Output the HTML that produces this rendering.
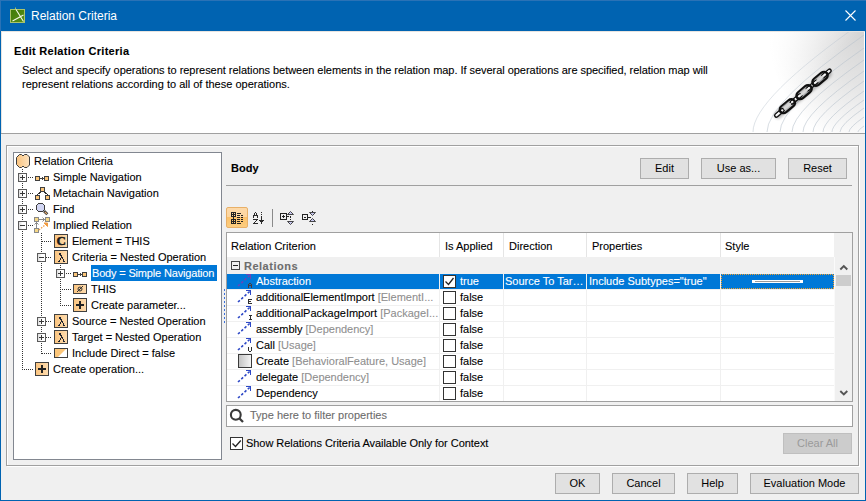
<!DOCTYPE html>
<html><head><meta charset="utf-8">
<style>
*{margin:0;padding:0;box-sizing:border-box}
html,body{width:866px;height:501px;overflow:hidden;background:#f0f0f0}
body{position:relative;font-family:"Liberation Sans",sans-serif;font-size:11px;color:#000}
.a{position:absolute}
.t{position:absolute;white-space:nowrap;line-height:16px;height:16px;-webkit-text-stroke:0.1px currentColor}
.btn{position:absolute;background:#e1e1e1;border:1px solid #adadad;text-align:center;line-height:19px;font-size:11px}
.etch{position:absolute;border:1px solid #a0a0a0;box-shadow:1px 1px 0 #fff, inset 1px 1px 0 #fff}
</style></head><body>
<!-- window border -->
<div class="a" style="left:0;top:0;width:866px;height:501px;border:1px solid #0063b1;border-top:none"></div>
<!-- title bar -->
<div class="a" style="left:0;top:0;width:866px;height:31px;background:#0063b1"></div>
<svg class="a" style="left:0;top:0" width="40" height="31"><defs><linearGradient id="tig" x1="0" y1="0" x2="1" y2="1"><stop offset="0" stop-color="#3f7a08"/><stop offset="1" stop-color="#5a9018"/></linearGradient></defs>
<rect x="10.5" y="9.5" width="14" height="13" fill="url(#tig)" stroke="#a9c36a"/>
<path d="M16 9.5 L23.5 21.5 M12.5 21 L23.5 15" stroke="#f4f8e8" stroke-width="1.1" fill="none"/>
<rect x="15" y="7.5" width="1" height="1.5" fill="#9fc060"/></svg>
<div class="t" style="left:31px;top:8px;color:#fff;font-size:12px;-webkit-text-stroke:0">Relation Criteria</div>
<svg class="a" style="left:845px;top:10px" width="11" height="11" viewBox="0 0 11 11"><path d="M0.5 0.5 L10.5 10.5 M10.5 0.5 L0.5 10.5" stroke="#fff" stroke-width="1.1"/></svg>

<div class="a" style="left:0;top:0;width:866px;height:1px;background:#2a72b6"></div>
<div class="a" style="left:0;top:0;width:1px;height:31px;background:#2a72b6"></div>
<!-- header -->
<div class="a" style="left:1px;top:31px;width:864px;height:102px;background:#fff;border-top:1px solid #e8e4e0;border-left:1px solid #e8e4e0"></div>
<!-- header image -->
<div class="a" style="left:740px;top:32px;width:124px;height:101px;background:radial-gradient(ellipse 95px 115px at 100% 0%,#d4d4d4 0%,#e4e4e4 45%,#fff 100%)"></div>
<svg class="a" style="left:740px;top:32px" width="124" height="101" viewBox="0 1 124 101">
<defs><filter id="bl" x="-30%" y="-30%" width="160%" height="160%"><feGaussianBlur stdDeviation="1.8"/></filter>
<linearGradient id="fade" x1="0" y1="0" x2="1" y2="0.75"><stop offset="0.2" stop-color="#fff" stop-opacity="1"/><stop offset="0.62" stop-color="#fff" stop-opacity="0"/></linearGradient></defs>
<g fill="none" stroke="#b8c3cc" stroke-width="0.6"><path d="M118 101 Q118 99.2 124 95"/><path d="M109 101 Q109 96.5 124 86"/><path d="M100 101 Q100 93.8 124 77"/><path d="M92 101 Q92 91.4 124 69"/><path d="M83 101 Q83 88.7 124 60"/><path d="M73 101 Q73 85.7 124 50"/><path d="M63 101 Q63 82.7 124 40"/><path d="M52 101 Q52 79.4 124 29"/><path d="M40 101 Q40 75.8 124 17"/><path d="M27 101 Q27 71.9 124 4"/><path d="M13 101 Q13 67.7 124 -10"/></g>
<rect x="0" y="0" width="124" height="102" fill="url(#fade)" opacity="0.8"/>
<path d="M38 84 L88 43" stroke="#000" stroke-width="7" opacity="0.28" filter="url(#bl)" stroke-linecap="round"/>
<g transform="translate(62.5 62.5) rotate(-40) scale(1.04 0.95)"><rect x="-34.5" y="-1.8" width="11" height="3.6" rx="1.8" fill="#e8e8e8" stroke="#101010" stroke-width="1.4"/><path d="M-33.0 -0.4 H-25.0" stroke="#fff" stroke-width="1"/><rect x="-15.0" y="-1.8" width="14" height="3.6" rx="1.8" fill="#e8e8e8" stroke="#101010" stroke-width="1.4"/><path d="M-13.5 -0.4 H-2.5" stroke="#fff" stroke-width="1"/><rect x="5.0" y="-1.8" width="14" height="3.6" rx="1.8" fill="#e8e8e8" stroke="#101010" stroke-width="1.4"/><path d="M6.5 -0.4 H17.5" stroke="#fff" stroke-width="1"/><rect x="24.5" y="-1.8" width="11" height="3.6" rx="1.8" fill="#e8e8e8" stroke="#101010" stroke-width="1.4"/><path d="M26.0 -0.4 H34.0" stroke="#fff" stroke-width="1"/><rect x="-27.5" y="-4" width="17" height="8" rx="4" fill="none" stroke="#101010" stroke-width="2.4"/><rect x="-23.5" y="-1.4" width="9" height="2.8" rx="1.4" fill="#d8d8d8"/><path d="M-24 -2.9 H-15" stroke="#9a9a9a" stroke-width="0.6"/><rect x="-6.5" y="-4" width="17" height="8" rx="4" fill="none" stroke="#101010" stroke-width="2.4"/><rect x="-2.5" y="-1.4" width="9" height="2.8" rx="1.4" fill="#d8d8d8"/><path d="M-3 -2.9 H6" stroke="#9a9a9a" stroke-width="0.6"/><rect x="13.5" y="-4" width="17" height="8" rx="4" fill="none" stroke="#101010" stroke-width="2.4"/><rect x="17.5" y="-1.4" width="9" height="2.8" rx="1.4" fill="#d8d8d8"/><path d="M17 -2.9 H26" stroke="#9a9a9a" stroke-width="0.6"/></g>
</svg>
<div class="a" style="left:1px;top:133px;width:864px;height:1px;background:#a0a0a0"></div>
<div class="t" style="left:14px;top:43px;font-weight:bold;letter-spacing:0.3px">Edit Relation Criteria</div>
<div class="t" style="left:22px;top:62px;letter-spacing:-0.04px">Select and specify operations to represent relations between elements in the relation map. If several operations are specified, relation map will</div>
<div class="t" style="left:22px;top:76px">represent relations according to all of these operations.</div>

<!-- main etched panel -->
<div class="etch" style="left:6px;top:145px;width:853px;height:321px"></div>

<!-- tree -->
<div class="a" style="left:13px;top:152px;width:209px;height:308px;background:#fff;border:1px solid #828790"></div>

<svg class="a" style="left:0;top:0" width="866" height="501" ><defs>
<linearGradient id="exg" x1="0" y1="0" x2="1" y2="0"><stop offset="0" stop-color="#d8d8d8"/><stop offset="0.5" stop-color="#fff"/><stop offset="1" stop-color="#fff"/></linearGradient>
<linearGradient id="og" x1="0" y1="0" x2="1" y2="0"><stop offset="0" stop-color="#fbc47e"/><stop offset="1" stop-color="#fde3c0"/></linearGradient>
<linearGradient id="og2" x1="0" y1="0" x2="1" y2="0"><stop offset="0" stop-color="#fbc47e"/><stop offset="1" stop-color="#fddcb0"/></linearGradient>
</defs><g fill="#333" shape-rendering="crispEdges"><rect x="22" y="169" width="1" height="1"/><rect x="22" y="171" width="1" height="1"/><rect x="22" y="173" width="1" height="1"/><rect x="22" y="175" width="1" height="1"/><rect x="22" y="177" width="1" height="1"/><rect x="22" y="179" width="1" height="1"/><rect x="22" y="181" width="1" height="1"/><rect x="22" y="183" width="1" height="1"/><rect x="22" y="185" width="1" height="1"/><rect x="22" y="187" width="1" height="1"/><rect x="22" y="189" width="1" height="1"/><rect x="22" y="191" width="1" height="1"/><rect x="22" y="193" width="1" height="1"/><rect x="22" y="195" width="1" height="1"/><rect x="22" y="197" width="1" height="1"/><rect x="22" y="199" width="1" height="1"/><rect x="22" y="201" width="1" height="1"/><rect x="22" y="203" width="1" height="1"/><rect x="22" y="205" width="1" height="1"/><rect x="22" y="207" width="1" height="1"/><rect x="22" y="209" width="1" height="1"/><rect x="22" y="211" width="1" height="1"/><rect x="22" y="213" width="1" height="1"/><rect x="22" y="215" width="1" height="1"/><rect x="22" y="217" width="1" height="1"/><rect x="22" y="219" width="1" height="1"/><rect x="22" y="221" width="1" height="1"/><rect x="22" y="223" width="1" height="1"/><rect x="22" y="225" width="1" height="1"/><rect x="22" y="227" width="1" height="1"/><rect x="22" y="229" width="1" height="1"/><rect x="22" y="231" width="1" height="1"/><rect x="22" y="233" width="1" height="1"/><rect x="22" y="235" width="1" height="1"/><rect x="22" y="237" width="1" height="1"/><rect x="22" y="239" width="1" height="1"/><rect x="22" y="241" width="1" height="1"/><rect x="22" y="243" width="1" height="1"/><rect x="22" y="245" width="1" height="1"/><rect x="22" y="247" width="1" height="1"/><rect x="22" y="249" width="1" height="1"/><rect x="22" y="251" width="1" height="1"/><rect x="22" y="253" width="1" height="1"/><rect x="22" y="255" width="1" height="1"/><rect x="22" y="257" width="1" height="1"/><rect x="22" y="259" width="1" height="1"/><rect x="22" y="261" width="1" height="1"/><rect x="22" y="263" width="1" height="1"/><rect x="22" y="265" width="1" height="1"/><rect x="22" y="267" width="1" height="1"/><rect x="22" y="269" width="1" height="1"/><rect x="22" y="271" width="1" height="1"/><rect x="22" y="273" width="1" height="1"/><rect x="22" y="275" width="1" height="1"/><rect x="22" y="277" width="1" height="1"/><rect x="22" y="279" width="1" height="1"/><rect x="22" y="281" width="1" height="1"/><rect x="22" y="283" width="1" height="1"/><rect x="22" y="285" width="1" height="1"/><rect x="22" y="287" width="1" height="1"/><rect x="22" y="289" width="1" height="1"/><rect x="22" y="291" width="1" height="1"/><rect x="22" y="293" width="1" height="1"/><rect x="22" y="295" width="1" height="1"/><rect x="22" y="297" width="1" height="1"/><rect x="22" y="299" width="1" height="1"/><rect x="22" y="301" width="1" height="1"/><rect x="22" y="303" width="1" height="1"/><rect x="22" y="305" width="1" height="1"/><rect x="22" y="307" width="1" height="1"/><rect x="22" y="309" width="1" height="1"/><rect x="22" y="311" width="1" height="1"/><rect x="22" y="313" width="1" height="1"/><rect x="22" y="315" width="1" height="1"/><rect x="22" y="317" width="1" height="1"/><rect x="22" y="319" width="1" height="1"/><rect x="22" y="321" width="1" height="1"/><rect x="22" y="323" width="1" height="1"/><rect x="22" y="325" width="1" height="1"/><rect x="22" y="327" width="1" height="1"/><rect x="22" y="329" width="1" height="1"/><rect x="22" y="331" width="1" height="1"/><rect x="22" y="333" width="1" height="1"/><rect x="22" y="335" width="1" height="1"/><rect x="22" y="337" width="1" height="1"/><rect x="22" y="339" width="1" height="1"/><rect x="22" y="341" width="1" height="1"/><rect x="22" y="343" width="1" height="1"/><rect x="22" y="345" width="1" height="1"/><rect x="22" y="347" width="1" height="1"/><rect x="22" y="349" width="1" height="1"/><rect x="22" y="351" width="1" height="1"/><rect x="22" y="353" width="1" height="1"/><rect x="22" y="355" width="1" height="1"/><rect x="22" y="357" width="1" height="1"/><rect x="22" y="359" width="1" height="1"/><rect x="22" y="361" width="1" height="1"/><rect x="22" y="363" width="1" height="1"/><rect x="22" y="365" width="1" height="1"/><rect x="22" y="367" width="1" height="1"/><rect x="22" y="369" width="1" height="1"/><rect x="22" y="177" width="1" height="1"/><rect x="24" y="177" width="1" height="1"/><rect x="26" y="177" width="1" height="1"/><rect x="28" y="177" width="1" height="1"/><rect x="30" y="177" width="1" height="1"/><rect x="32" y="177" width="1" height="1"/><rect x="22" y="193" width="1" height="1"/><rect x="24" y="193" width="1" height="1"/><rect x="26" y="193" width="1" height="1"/><rect x="28" y="193" width="1" height="1"/><rect x="30" y="193" width="1" height="1"/><rect x="32" y="193" width="1" height="1"/><rect x="22" y="209" width="1" height="1"/><rect x="24" y="209" width="1" height="1"/><rect x="26" y="209" width="1" height="1"/><rect x="28" y="209" width="1" height="1"/><rect x="30" y="209" width="1" height="1"/><rect x="32" y="209" width="1" height="1"/><rect x="22" y="225" width="1" height="1"/><rect x="24" y="225" width="1" height="1"/><rect x="26" y="225" width="1" height="1"/><rect x="28" y="225" width="1" height="1"/><rect x="30" y="225" width="1" height="1"/><rect x="32" y="225" width="1" height="1"/><rect x="42" y="241" width="1" height="1"/><rect x="44" y="241" width="1" height="1"/><rect x="46" y="241" width="1" height="1"/><rect x="48" y="241" width="1" height="1"/><rect x="50" y="241" width="1" height="1"/><rect x="42" y="257" width="1" height="1"/><rect x="44" y="257" width="1" height="1"/><rect x="46" y="257" width="1" height="1"/><rect x="48" y="257" width="1" height="1"/><rect x="50" y="257" width="1" height="1"/><rect x="60" y="273" width="1" height="1"/><rect x="62" y="273" width="1" height="1"/><rect x="64" y="273" width="1" height="1"/><rect x="66" y="273" width="1" height="1"/><rect x="68" y="273" width="1" height="1"/><rect x="70" y="273" width="1" height="1"/><rect x="60" y="289" width="1" height="1"/><rect x="62" y="289" width="1" height="1"/><rect x="64" y="289" width="1" height="1"/><rect x="66" y="289" width="1" height="1"/><rect x="68" y="289" width="1" height="1"/><rect x="70" y="289" width="1" height="1"/><rect x="60" y="305" width="1" height="1"/><rect x="62" y="305" width="1" height="1"/><rect x="64" y="305" width="1" height="1"/><rect x="66" y="305" width="1" height="1"/><rect x="68" y="305" width="1" height="1"/><rect x="70" y="305" width="1" height="1"/><rect x="42" y="321" width="1" height="1"/><rect x="44" y="321" width="1" height="1"/><rect x="46" y="321" width="1" height="1"/><rect x="48" y="321" width="1" height="1"/><rect x="50" y="321" width="1" height="1"/><rect x="42" y="337" width="1" height="1"/><rect x="44" y="337" width="1" height="1"/><rect x="46" y="337" width="1" height="1"/><rect x="48" y="337" width="1" height="1"/><rect x="50" y="337" width="1" height="1"/><rect x="42" y="353" width="1" height="1"/><rect x="44" y="353" width="1" height="1"/><rect x="46" y="353" width="1" height="1"/><rect x="48" y="353" width="1" height="1"/><rect x="50" y="353" width="1" height="1"/><rect x="22" y="369" width="1" height="1"/><rect x="24" y="369" width="1" height="1"/><rect x="26" y="369" width="1" height="1"/><rect x="28" y="369" width="1" height="1"/><rect x="30" y="369" width="1" height="1"/><rect x="32" y="369" width="1" height="1"/><rect x="41" y="233" width="1" height="1"/><rect x="41" y="235" width="1" height="1"/><rect x="41" y="237" width="1" height="1"/><rect x="41" y="239" width="1" height="1"/><rect x="41" y="241" width="1" height="1"/><rect x="41" y="243" width="1" height="1"/><rect x="41" y="245" width="1" height="1"/><rect x="41" y="247" width="1" height="1"/><rect x="41" y="249" width="1" height="1"/><rect x="41" y="251" width="1" height="1"/><rect x="41" y="253" width="1" height="1"/><rect x="41" y="255" width="1" height="1"/><rect x="41" y="257" width="1" height="1"/><rect x="41" y="259" width="1" height="1"/><rect x="41" y="261" width="1" height="1"/><rect x="41" y="263" width="1" height="1"/><rect x="41" y="265" width="1" height="1"/><rect x="41" y="267" width="1" height="1"/><rect x="41" y="269" width="1" height="1"/><rect x="41" y="271" width="1" height="1"/><rect x="41" y="273" width="1" height="1"/><rect x="41" y="275" width="1" height="1"/><rect x="41" y="277" width="1" height="1"/><rect x="41" y="279" width="1" height="1"/><rect x="41" y="281" width="1" height="1"/><rect x="41" y="283" width="1" height="1"/><rect x="41" y="285" width="1" height="1"/><rect x="41" y="287" width="1" height="1"/><rect x="41" y="289" width="1" height="1"/><rect x="41" y="291" width="1" height="1"/><rect x="41" y="293" width="1" height="1"/><rect x="41" y="295" width="1" height="1"/><rect x="41" y="297" width="1" height="1"/><rect x="41" y="299" width="1" height="1"/><rect x="41" y="301" width="1" height="1"/><rect x="41" y="303" width="1" height="1"/><rect x="41" y="305" width="1" height="1"/><rect x="41" y="307" width="1" height="1"/><rect x="41" y="309" width="1" height="1"/><rect x="41" y="311" width="1" height="1"/><rect x="41" y="313" width="1" height="1"/><rect x="41" y="315" width="1" height="1"/><rect x="41" y="317" width="1" height="1"/><rect x="41" y="319" width="1" height="1"/><rect x="41" y="321" width="1" height="1"/><rect x="41" y="323" width="1" height="1"/><rect x="41" y="325" width="1" height="1"/><rect x="41" y="327" width="1" height="1"/><rect x="41" y="329" width="1" height="1"/><rect x="41" y="331" width="1" height="1"/><rect x="41" y="333" width="1" height="1"/><rect x="41" y="335" width="1" height="1"/><rect x="41" y="337" width="1" height="1"/><rect x="41" y="339" width="1" height="1"/><rect x="41" y="341" width="1" height="1"/><rect x="41" y="343" width="1" height="1"/><rect x="41" y="345" width="1" height="1"/><rect x="41" y="347" width="1" height="1"/><rect x="41" y="349" width="1" height="1"/><rect x="41" y="351" width="1" height="1"/><rect x="41" y="353" width="1" height="1"/><rect x="60" y="265" width="1" height="1"/><rect x="60" y="267" width="1" height="1"/><rect x="60" y="269" width="1" height="1"/><rect x="60" y="271" width="1" height="1"/><rect x="60" y="273" width="1" height="1"/><rect x="60" y="275" width="1" height="1"/><rect x="60" y="277" width="1" height="1"/><rect x="60" y="279" width="1" height="1"/><rect x="60" y="281" width="1" height="1"/><rect x="60" y="283" width="1" height="1"/><rect x="60" y="285" width="1" height="1"/><rect x="60" y="287" width="1" height="1"/><rect x="60" y="289" width="1" height="1"/><rect x="60" y="291" width="1" height="1"/><rect x="60" y="293" width="1" height="1"/><rect x="60" y="295" width="1" height="1"/><rect x="60" y="297" width="1" height="1"/><rect x="60" y="299" width="1" height="1"/><rect x="60" y="301" width="1" height="1"/><rect x="60" y="303" width="1" height="1"/><rect x="60" y="305" width="1" height="1"/></g><path d="M19.5 154.5 h2 l1.5 1.5 l1.5 -1.5 h2.5 l2.5 2.5 v8 l-2.5 2.5 h-2.5 l-1.5 -1.5 l-1.5 1.5 h-2 l-3 -3 v-7 z" fill="url(#og)" stroke="#3c3c3c" stroke-width="1"/><rect x="18.5" y="173.5" width="8" height="8" fill="url(#exg)" stroke="#5a5a5a"/><rect x="20" y="177" width="5" height="1" fill="#383838"/><rect x="22" y="175" width="1" height="5" fill="#383838"/><rect x="35.5" y="176.5" width="4" height="4" fill="#fcc679" stroke="#404040"/><rect x="44.5" y="176.5" width="4" height="4" fill="#fcc679" stroke="#404040"/><rect x="40" y="178" width="4" height="1" fill="#404040"/><rect x="42" y="177" width="1" height="3" fill="#404040"/><rect x="18.5" y="189.5" width="8" height="8" fill="url(#exg)" stroke="#5a5a5a"/><rect x="20" y="193" width="5" height="1" fill="#383838"/><rect x="22" y="191" width="1" height="5" fill="#383838"/><g shape-rendering="crispEdges"><rect x="40.5" y="187.5" width="4" height="4" fill="#fcc679" stroke="#404040"/><rect x="35.5" y="195.5" width="4" height="4" fill="#fcc679" stroke="#404040"/><rect x="45.5" y="195.5" width="4" height="4" fill="#fcc679" stroke="#404040"/><rect x="39" y="192" width="1" height="1" fill="#303030"/><rect x="38" y="193" width="1" height="1" fill="#303030"/><rect x="40" y="192" width="1" height="1" fill="#303030"/><rect x="37" y="194" width="1" height="1" fill="#303030"/><rect x="39" y="193" width="1" height="1" fill="#303030"/><rect x="45" y="192" width="1" height="1" fill="#303030"/><rect x="46" y="193" width="1" height="1" fill="#303030"/><rect x="44" y="192" width="1" height="1" fill="#303030"/><rect x="47" y="194" width="1" height="1" fill="#303030"/><rect x="45" y="193" width="1" height="1" fill="#303030"/></g><rect x="18.5" y="205.5" width="8" height="8" fill="url(#exg)" stroke="#5a5a5a"/><rect x="20" y="209" width="5" height="1" fill="#383838"/><rect x="22" y="207" width="1" height="5" fill="#383838"/><path d="M44 211 L47.3 214.3" stroke="#3c3c3c" stroke-width="2.8"/><path d="M44.8 211.8 L46.8 213.8" stroke="#f0b070" stroke-width="1.1"/><path d="M38.5 203.5 H42.5 L44.5 205.5 V209.5 L42.5 211.5 H38.5 L36.5 209.5 V205.5 Z" fill="#d2d6f4" stroke="#3c3c3c" shape-rendering="crispEdges"/><rect x="18.5" y="221.5" width="8" height="8" fill="url(#exg)" stroke="#5a5a5a"/><rect x="20" y="225" width="5" height="1" fill="#383838"/><g shape-rendering="crispEdges"><rect x="34.5" y="217.5" width="4" height="4" fill="#f6d886" stroke="#8a8a8a"/><rect x="45.5" y="217.5" width="4" height="4" fill="#f6d886" stroke="#8a8a8a"/><rect x="34.5" y="228.5" width="4" height="4" fill="#f6d886" stroke="#8a8a8a"/><rect x="39" y="219" width="6" height="1" fill="#8a8a8a"/><rect x="36" y="222" width="1" height="6" fill="#8a8a8a"/></g><path d="M42.5 217.5 L44.5 219.5 L42.5 221.5 M34.5 224.5 L36.5 222.5 L38.5 224.5" stroke="#8a8a8a" stroke-width="1" fill="none"/><path d="M39 230 L45 225" stroke="#f09a40" stroke-width="1.3" stroke-dasharray="1.4 1.4"/><path d="M44 223 h3.5 v3.5 z" fill="#f09a40" stroke="#f09a40" stroke-width="1"/><rect x="54.5" y="234.5" width="13" height="13" fill="url(#og2)" stroke="#404040" shape-rendering="crispEdges"/><text x="61.2" y="245.3" font-family="Liberation Serif" font-weight="bold" font-size="13" text-anchor="middle" fill="#1a1a1a" stroke="#1a1a1a" stroke-width="0.5">C</text><rect x="37.5" y="253.5" width="8" height="8" fill="url(#exg)" stroke="#5a5a5a"/><rect x="39" y="257" width="5" height="1" fill="#383838"/><rect x="54.5" y="250.5" width="13" height="13" fill="url(#og2)" stroke="#404040" shape-rendering="crispEdges"/><g fill="#1f2430" shape-rendering="crispEdges"><rect x="59" y="253" width="1" height="1"/><rect x="60" y="253" width="1" height="1"/><rect x="59" y="254" width="1" height="1"/><rect x="60" y="254" width="1" height="1"/><rect x="60" y="255" width="1" height="1"/><rect x="61" y="255" width="1" height="1"/><rect x="61" y="256" width="1" height="1"/><rect x="61" y="257" width="1" height="1"/><rect x="62" y="257" width="1" height="1"/><rect x="60" y="258" width="1" height="1"/><rect x="62" y="258" width="1" height="1"/><rect x="60" y="259" width="1" height="1"/><rect x="63" y="259" width="1" height="1"/><rect x="59" y="260" width="1" height="1"/><rect x="63" y="260" width="1" height="1"/><rect x="58" y="261" width="1" height="1"/><rect x="59" y="261" width="1" height="1"/><rect x="63" y="261" width="1" height="1"/><rect x="64" y="261" width="1" height="1"/></g><rect x="56.5" y="269.5" width="8" height="8" fill="url(#exg)" stroke="#5a5a5a"/><rect x="58" y="273" width="5" height="1" fill="#383838"/><rect x="60" y="271" width="1" height="5" fill="#383838"/><rect x="73.5" y="272.5" width="4" height="4" fill="#fcc679" stroke="#404040"/><rect x="82.5" y="272.5" width="4" height="4" fill="#fcc679" stroke="#404040"/><rect x="78" y="274" width="4" height="1" fill="#404040"/><rect x="80" y="273" width="1" height="3" fill="#404040"/><rect x="73.5" y="284.5" width="13" height="9" fill="url(#og2)" stroke="#404040" shape-rendering="crispEdges"/><circle cx="80" cy="289" r="2" fill="none" stroke="#333" stroke-width="1"/><path d="M77 292 L83 286" stroke="#333" stroke-width="1"/><rect x="73.5" y="298.5" width="13" height="13" fill="url(#og2)" stroke="#404040" shape-rendering="crispEdges"/><path d="M76 305 H84 M80 301 V309" stroke="#222" stroke-width="2"/><rect x="37.5" y="317.5" width="8" height="8" fill="url(#exg)" stroke="#5a5a5a"/><rect x="39" y="321" width="5" height="1" fill="#383838"/><rect x="41" y="319" width="1" height="5" fill="#383838"/><rect x="54.5" y="314.5" width="13" height="13" fill="url(#og2)" stroke="#404040" shape-rendering="crispEdges"/><g fill="#1f2430" shape-rendering="crispEdges"><rect x="59" y="317" width="1" height="1"/><rect x="60" y="317" width="1" height="1"/><rect x="59" y="318" width="1" height="1"/><rect x="60" y="318" width="1" height="1"/><rect x="60" y="319" width="1" height="1"/><rect x="61" y="319" width="1" height="1"/><rect x="61" y="320" width="1" height="1"/><rect x="61" y="321" width="1" height="1"/><rect x="62" y="321" width="1" height="1"/><rect x="60" y="322" width="1" height="1"/><rect x="62" y="322" width="1" height="1"/><rect x="60" y="323" width="1" height="1"/><rect x="63" y="323" width="1" height="1"/><rect x="59" y="324" width="1" height="1"/><rect x="63" y="324" width="1" height="1"/><rect x="58" y="325" width="1" height="1"/><rect x="59" y="325" width="1" height="1"/><rect x="63" y="325" width="1" height="1"/><rect x="64" y="325" width="1" height="1"/></g><rect x="37.5" y="333.5" width="8" height="8" fill="url(#exg)" stroke="#5a5a5a"/><rect x="39" y="337" width="5" height="1" fill="#383838"/><rect x="41" y="335" width="1" height="5" fill="#383838"/><rect x="54.5" y="330.5" width="13" height="13" fill="url(#og2)" stroke="#404040" shape-rendering="crispEdges"/><g fill="#1f2430" shape-rendering="crispEdges"><rect x="59" y="333" width="1" height="1"/><rect x="60" y="333" width="1" height="1"/><rect x="59" y="334" width="1" height="1"/><rect x="60" y="334" width="1" height="1"/><rect x="60" y="335" width="1" height="1"/><rect x="61" y="335" width="1" height="1"/><rect x="61" y="336" width="1" height="1"/><rect x="61" y="337" width="1" height="1"/><rect x="62" y="337" width="1" height="1"/><rect x="60" y="338" width="1" height="1"/><rect x="62" y="338" width="1" height="1"/><rect x="60" y="339" width="1" height="1"/><rect x="63" y="339" width="1" height="1"/><rect x="59" y="340" width="1" height="1"/><rect x="63" y="340" width="1" height="1"/><rect x="58" y="341" width="1" height="1"/><rect x="59" y="341" width="1" height="1"/><rect x="63" y="341" width="1" height="1"/><rect x="64" y="341" width="1" height="1"/></g><rect x="54.5" y="348.5" width="13" height="9" fill="#fff" stroke="#404040" shape-rendering="crispEdges"/><path d="M55 349 H66 L58 357 H55 Z" fill="#fcc679"/><rect x="35.5" y="362.5" width="13" height="13" fill="url(#og2)" stroke="#404040" shape-rendering="crispEdges"/><path d="M38 369 H46 M42 365 V373" stroke="#222" stroke-width="2"/></svg>
<div class="t" style="left:34px;top:153px">Relation Criteria</div>
<div class="t" style="left:53px;top:169px">Simple Navigation</div>
<div class="t" style="left:53px;top:185px">Metachain Navigation</div>
<div class="t" style="left:53px;top:201px">Find</div>
<div class="t" style="left:53px;top:217px">Implied Relation</div>
<div class="t" style="left:72px;top:233px">Element = THIS</div>
<div class="t" style="left:72px;top:249px">Criteria = Nested Operation</div>
<div class="t" style="left:91px;top:265px;width:126px;overflow:hidden;letter-spacing:-0.17px;background:#0078d7;color:#fff;padding:0 0 0 1px">Body = Simple Navigation</div>
<div class="t" style="left:91px;top:281px">THIS</div>
<div class="t" style="left:91px;top:297px">Create parameter...</div>
<div class="t" style="left:72px;top:313px">Source = Nested Operation</div>
<div class="t" style="left:72px;top:329px">Target = Nested Operation</div>
<div class="t" style="left:72px;top:345px">Include Direct = false</div>
<div class="t" style="left:53px;top:361px">Create operation...</div>
<svg class="a" style="left:224px;top:289px" width="1" height="34"><g fill="#3a70d8"><rect x="0" y="0" width="1" height="2"/><rect x="0" y="4" width="1" height="2"/><rect x="0" y="8" width="1" height="2"/><rect x="0" y="12" width="1" height="2"/><rect x="0" y="16" width="1" height="2"/><rect x="0" y="20" width="1" height="2"/><rect x="0" y="24" width="1" height="2"/><rect x="0" y="28" width="1" height="2"/><rect x="0" y="32" width="1" height="2"/></g></svg>
<!-- right panel -->
<div class="t" style="left:231px;top:160px;font-weight:bold">Body</div>
<div class="btn" style="left:640px;top:158px;width:49px;height:21px">Edit</div>
<div class="btn" style="left:701px;top:158px;width:75px;height:21px">Use as...</div>
<div class="btn" style="left:788px;top:158px;width:59px;height:21px">Reset</div>
<div class="a" style="left:226px;top:185px;width:626px;height:1px;background:#a0a0a0"></div>

<!-- toolbar -->
<div class="a" style="left:226px;top:207px;width:22px;height:21px;border:1px solid #e8b068;border-radius:2px;background:linear-gradient(#fdd9a9 0,#fdd6a0 45%,#fcc26c 50%,#fccd80 100%)"></div>
<svg class="a" style="left:0;top:0" width="866" height="501">
<g shape-rendering="crispEdges" fill="#222">
<!-- grid icon boxes -->
<rect x="231" y="212" width="5" height="1"/><rect x="231" y="216" width="5" height="1"/><rect x="231" y="212" width="1" height="5"/><rect x="235" y="212" width="1" height="5"/>
<rect x="233" y="213" width="1" height="3"/><rect x="232" y="214" width="3" height="1"/>
<rect x="233" y="217" width="1" height="2"/>
<rect x="231" y="219" width="5" height="1"/><rect x="231" y="223" width="5" height="1"/><rect x="231" y="219" width="1" height="5"/><rect x="235" y="219" width="1" height="5"/>
<rect x="233" y="220" width="1" height="3"/><rect x="232" y="221" width="3" height="1"/>
<rect x="237" y="213" width="4" height="1"/><rect x="237" y="215" width="3" height="1"/><rect x="241" y="215" width="2" height="1"/><rect x="237" y="217" width="3" height="1"/><rect x="241" y="217" width="2" height="1"/><rect x="237" y="219" width="3" height="1"/><rect x="241" y="219" width="2" height="1"/><rect x="237" y="221" width="3" height="1"/><rect x="241" y="221" width="2" height="1"/><rect x="237" y="223" width="4" height="1"/>
<!-- separator -->
<rect x="272" y="209" width="1" height="18" fill="#8a8a8a"/>
<!-- expand icon box -->
<rect x="280" y="213" width="7" height="1"/><rect x="280" y="219" width="7" height="1"/><rect x="280" y="213" width="1" height="7"/><rect x="286" y="213" width="1" height="7"/>
<rect x="283" y="215" width="1" height="3"/><rect x="282" y="216" width="3" height="1"/>
<rect x="287" y="216" width="2" height="1"/>
<rect x="290" y="216" width="1" height="2"/><rect x="290" y="219" width="1" height="1"/>
<!-- collapse icon box -->
<rect x="302" y="214" width="6" height="1"/><rect x="302" y="219" width="6" height="1"/><rect x="302" y="214" width="1" height="6"/><rect x="307" y="214" width="1" height="6"/>
<rect x="304" y="217" width="2" height="1"/>
<rect x="308" y="217" width="3" height="1"/>
<rect x="312" y="211" width="1" height="1"/><rect x="312" y="224" width="1" height="1"/>
</g>
<!-- AZ --><g fill="#2a2a2a" shape-rendering="crispEdges"><rect x="255" y="212" width="1" height="1"/><rect x="261" y="212" width="1" height="1"/><rect x="254" y="213" width="1" height="1"/><rect x="256" y="213" width="1" height="1"/><rect x="254" y="214" width="1" height="1"/><rect x="256" y="214" width="1" height="1"/><rect x="261" y="214" width="1" height="1"/><rect x="253" y="215" width="1" height="1"/><rect x="254" y="215" width="1" height="1"/><rect x="255" y="215" width="1" height="1"/><rect x="256" y="215" width="1" height="1"/><rect x="257" y="215" width="1" height="1"/><rect x="253" y="216" width="1" height="1"/><rect x="257" y="216" width="1" height="1"/><rect x="261" y="216" width="1" height="1"/><rect x="253" y="217" width="1" height="1"/><rect x="257" y="217" width="1" height="1"/><rect x="261" y="217" width="1" height="1"/><rect x="261" y="218" width="1" height="1"/><rect x="253" y="219" width="1" height="1"/><rect x="254" y="219" width="1" height="1"/><rect x="255" y="219" width="1" height="1"/><rect x="256" y="219" width="1" height="1"/><rect x="257" y="219" width="1" height="1"/><rect x="261" y="219" width="1" height="1"/><rect x="256" y="220" width="1" height="1"/><rect x="259" y="220" width="1" height="1"/><rect x="260" y="220" width="1" height="1"/><rect x="261" y="220" width="1" height="1"/><rect x="262" y="220" width="1" height="1"/><rect x="263" y="220" width="1" height="1"/><rect x="255" y="221" width="1" height="1"/><rect x="260" y="221" width="1" height="1"/><rect x="261" y="221" width="1" height="1"/><rect x="262" y="221" width="1" height="1"/><rect x="254" y="222" width="1" height="1"/><rect x="261" y="222" width="1" height="1"/><rect x="253" y="223" width="1" height="1"/><rect x="254" y="223" width="1" height="1"/><rect x="255" y="223" width="1" height="1"/><rect x="256" y="223" width="1" height="1"/><rect x="257" y="223" width="1" height="1"/><rect x="261" y="223" width="1" height="1"/></g>
<!-- expand triangles -->
<path d="M287.5 214.5 L290.5 211.5 L293.5 214.5 Z" fill="#c8c8f0" stroke="#333" stroke-width="0.9"/>
<path d="M287.5 221.5 L290.5 224.5 L293.5 221.5 Z" fill="#c8c8f0" stroke="#333" stroke-width="0.9"/>
<path d="M309.5 212.5 L312.5 215.5 L315.5 212.5 Z" fill="#c8c8f0" stroke="#333" stroke-width="0.9"/>
<path d="M309.5 221.5 L312.5 218.5 L315.5 221.5 Z" fill="#c8c8f0" stroke="#333" stroke-width="0.9"/>
</svg>
<!-- table -->
<div class="a" style="left:226px;top:232px;width:627px;height:170px;background:#fff;border:1px solid #a0a0a0"></div>

<svg class="a" style="left:0;top:0" width="866" height="501"><defs><linearGradient id="gg" x1="0" y1="0" x2="1" y2="0"><stop offset="0" stop-color="#c2c2c2"/><stop offset="1" stop-color="#f6f6f6"/></linearGradient></defs><rect x="439" y="233" width="1" height="24" fill="#e5e5e5"/><rect x="503" y="233" width="1" height="24" fill="#e5e5e5"/><rect x="586" y="233" width="1" height="24" fill="#e5e5e5"/><rect x="720" y="233" width="1" height="24" fill="#e5e5e5"/><rect x="834" y="233" width="18" height="24" fill="#f0f0f0"/><rect x="227" y="257" width="607" height="17" fill="#f0f0f0"/><rect x="231.5" y="261.5" width="8" height="8" fill="none" stroke="#444"/><rect x="233" y="265" width="5" height="1" fill="#222"/><rect x="227" y="289" width="607" height="1" fill="#f0f0f0"/><rect x="439" y="274" width="1" height="15" fill="#f0f0f0"/><rect x="503" y="274" width="1" height="15" fill="#f0f0f0"/><rect x="586" y="274" width="1" height="15" fill="#f0f0f0"/><rect x="720" y="274" width="1" height="15" fill="#f0f0f0"/><rect x="227" y="274" width="212" height="15" fill="#0078d7"/><rect x="440" y="274" width="63" height="15" fill="#0078d7"/><rect x="504" y="274" width="82" height="15" fill="#0078d7"/><rect x="587" y="274" width="133" height="15" fill="#0078d7"/><rect x="721" y="274" width="113" height="15" fill="#0078d7"/><g shape-rendering="crispEdges" fill="#6a44b8"><rect x="246" y="274" width="5" height="1"/><rect x="250" y="274" width="1" height="5"/></g><path d="M238 286 L250 275.2" stroke="#6a44b8" stroke-width="1.6" stroke-dasharray="2.5 1.9" fill="none"/><rect x="249" y="283" width="1" height="1" fill="#4a3a3a" shape-rendering="crispEdges"/><rect x="250" y="283" width="1" height="1" fill="#4a3a3a" shape-rendering="crispEdges"/><rect x="248" y="284" width="1" height="1" fill="#4a3a3a" shape-rendering="crispEdges"/><rect x="251" y="284" width="1" height="1" fill="#4a3a3a" shape-rendering="crispEdges"/><rect x="248" y="285" width="1" height="1" fill="#4a3a3a" shape-rendering="crispEdges"/><rect x="249" y="285" width="1" height="1" fill="#4a3a3a" shape-rendering="crispEdges"/><rect x="250" y="285" width="1" height="1" fill="#4a3a3a" shape-rendering="crispEdges"/><rect x="251" y="285" width="1" height="1" fill="#4a3a3a" shape-rendering="crispEdges"/><rect x="248" y="286" width="1" height="1" fill="#4a3a3a" shape-rendering="crispEdges"/><rect x="251" y="286" width="1" height="1" fill="#4a3a3a" shape-rendering="crispEdges"/><rect x="248" y="287" width="1" height="1" fill="#4a3a3a" shape-rendering="crispEdges"/><rect x="251" y="287" width="1" height="1" fill="#4a3a3a" shape-rendering="crispEdges"/><rect x="443.5" y="275.5" width="12" height="12" fill="#fff" stroke="#333"/><path d="M445.5 281.5 L448.5 284.5 L453.5 278" stroke="#222" stroke-width="1.3" fill="none"/><rect x="721.5" y="274.5" width="112" height="14" fill="none" stroke="#f0a030" stroke-width="1" stroke-dasharray="1 1" shape-rendering="crispEdges"/><rect x="752" y="280" width="51" height="3" fill="#fff"/><rect x="755" y="281" width="45" height="1" fill="#9a9a9a"/><rect x="227" y="305" width="607" height="1" fill="#f0f0f0"/><rect x="439" y="289" width="1" height="16" fill="#f0f0f0"/><rect x="503" y="289" width="1" height="16" fill="#f0f0f0"/><rect x="586" y="289" width="1" height="16" fill="#f0f0f0"/><rect x="720" y="289" width="1" height="16" fill="#f0f0f0"/><g shape-rendering="crispEdges" fill="#2d48c6"><rect x="246" y="290" width="5" height="1"/><rect x="250" y="290" width="1" height="5"/></g><path d="M238 302 L250 291.2" stroke="#2d48c6" stroke-width="1.6" stroke-dasharray="2.5 1.9" fill="none"/><rect x="248" y="299" width="1" height="1" fill="#303030" shape-rendering="crispEdges"/><rect x="249" y="299" width="1" height="1" fill="#303030" shape-rendering="crispEdges"/><rect x="250" y="299" width="1" height="1" fill="#303030" shape-rendering="crispEdges"/><rect x="251" y="299" width="1" height="1" fill="#303030" shape-rendering="crispEdges"/><rect x="248" y="300" width="1" height="1" fill="#303030" shape-rendering="crispEdges"/><rect x="248" y="301" width="1" height="1" fill="#303030" shape-rendering="crispEdges"/><rect x="249" y="301" width="1" height="1" fill="#303030" shape-rendering="crispEdges"/><rect x="250" y="301" width="1" height="1" fill="#303030" shape-rendering="crispEdges"/><rect x="248" y="302" width="1" height="1" fill="#303030" shape-rendering="crispEdges"/><rect x="248" y="303" width="1" height="1" fill="#303030" shape-rendering="crispEdges"/><rect x="249" y="303" width="1" height="1" fill="#303030" shape-rendering="crispEdges"/><rect x="250" y="303" width="1" height="1" fill="#303030" shape-rendering="crispEdges"/><rect x="251" y="303" width="1" height="1" fill="#303030" shape-rendering="crispEdges"/><rect x="443.5" y="291.5" width="12" height="12" fill="#fff" stroke="#333"/><rect x="227" y="321" width="607" height="1" fill="#f0f0f0"/><rect x="439" y="305" width="1" height="16" fill="#f0f0f0"/><rect x="503" y="305" width="1" height="16" fill="#f0f0f0"/><rect x="586" y="305" width="1" height="16" fill="#f0f0f0"/><rect x="720" y="305" width="1" height="16" fill="#f0f0f0"/><g shape-rendering="crispEdges" fill="#2d48c6"><rect x="246" y="306" width="5" height="1"/><rect x="250" y="306" width="1" height="5"/></g><path d="M238 318 L250 307.2" stroke="#2d48c6" stroke-width="1.6" stroke-dasharray="2.5 1.9" fill="none"/><rect x="249" y="315" width="1" height="1" fill="#303030" shape-rendering="crispEdges"/><rect x="250" y="315" width="1" height="1" fill="#303030" shape-rendering="crispEdges"/><rect x="251" y="315" width="1" height="1" fill="#303030" shape-rendering="crispEdges"/><rect x="250" y="316" width="1" height="1" fill="#303030" shape-rendering="crispEdges"/><rect x="250" y="317" width="1" height="1" fill="#303030" shape-rendering="crispEdges"/><rect x="250" y="318" width="1" height="1" fill="#303030" shape-rendering="crispEdges"/><rect x="249" y="319" width="1" height="1" fill="#303030" shape-rendering="crispEdges"/><rect x="250" y="319" width="1" height="1" fill="#303030" shape-rendering="crispEdges"/><rect x="251" y="319" width="1" height="1" fill="#303030" shape-rendering="crispEdges"/><rect x="443.5" y="307.5" width="12" height="12" fill="#fff" stroke="#333"/><rect x="227" y="337" width="607" height="1" fill="#f0f0f0"/><rect x="439" y="321" width="1" height="16" fill="#f0f0f0"/><rect x="503" y="321" width="1" height="16" fill="#f0f0f0"/><rect x="586" y="321" width="1" height="16" fill="#f0f0f0"/><rect x="720" y="321" width="1" height="16" fill="#f0f0f0"/><g shape-rendering="crispEdges" fill="#2d48c6"><rect x="246" y="322" width="5" height="1"/><rect x="250" y="322" width="1" height="5"/></g><path d="M238 334 L250 323.2" stroke="#2d48c6" stroke-width="1.6" stroke-dasharray="2.5 1.9" fill="none"/><rect x="443.5" y="323.5" width="12" height="12" fill="#fff" stroke="#333"/><rect x="227" y="353" width="607" height="1" fill="#f0f0f0"/><rect x="439" y="337" width="1" height="16" fill="#f0f0f0"/><rect x="503" y="337" width="1" height="16" fill="#f0f0f0"/><rect x="586" y="337" width="1" height="16" fill="#f0f0f0"/><rect x="720" y="337" width="1" height="16" fill="#f0f0f0"/><g shape-rendering="crispEdges" fill="#2d48c6"><rect x="246" y="338" width="5" height="1"/><rect x="250" y="338" width="1" height="5"/></g><path d="M238 350 L250 339.2" stroke="#2d48c6" stroke-width="1.6" stroke-dasharray="2.5 1.9" fill="none"/><rect x="248" y="347" width="1" height="1" fill="#303030" shape-rendering="crispEdges"/><rect x="251" y="347" width="1" height="1" fill="#303030" shape-rendering="crispEdges"/><rect x="248" y="348" width="1" height="1" fill="#303030" shape-rendering="crispEdges"/><rect x="251" y="348" width="1" height="1" fill="#303030" shape-rendering="crispEdges"/><rect x="248" y="349" width="1" height="1" fill="#303030" shape-rendering="crispEdges"/><rect x="251" y="349" width="1" height="1" fill="#303030" shape-rendering="crispEdges"/><rect x="248" y="350" width="1" height="1" fill="#303030" shape-rendering="crispEdges"/><rect x="251" y="350" width="1" height="1" fill="#303030" shape-rendering="crispEdges"/><rect x="249" y="351" width="1" height="1" fill="#303030" shape-rendering="crispEdges"/><rect x="250" y="351" width="1" height="1" fill="#303030" shape-rendering="crispEdges"/><rect x="443.5" y="339.5" width="12" height="12" fill="#fff" stroke="#333"/><rect x="227" y="369" width="607" height="1" fill="#f0f0f0"/><rect x="439" y="353" width="1" height="16" fill="#f0f0f0"/><rect x="503" y="353" width="1" height="16" fill="#f0f0f0"/><rect x="586" y="353" width="1" height="16" fill="#f0f0f0"/><rect x="720" y="353" width="1" height="16" fill="#f0f0f0"/><rect x="238.5" y="354.5" width="13" height="13" fill="url(#gg)" stroke="#3a3a3a"/><rect x="443.5" y="355.5" width="12" height="12" fill="#fff" stroke="#333"/><rect x="227" y="385" width="607" height="1" fill="#f0f0f0"/><rect x="439" y="369" width="1" height="16" fill="#f0f0f0"/><rect x="503" y="369" width="1" height="16" fill="#f0f0f0"/><rect x="586" y="369" width="1" height="16" fill="#f0f0f0"/><rect x="720" y="369" width="1" height="16" fill="#f0f0f0"/><g shape-rendering="crispEdges" fill="#2d48c6"><rect x="246" y="370" width="5" height="1"/><rect x="250" y="370" width="1" height="5"/></g><path d="M238 382 L250 371.2" stroke="#2d48c6" stroke-width="1.6" stroke-dasharray="2.5 1.9" fill="none"/><rect x="443.5" y="371.5" width="12" height="12" fill="#fff" stroke="#333"/><rect x="439" y="385" width="1" height="16" fill="#f0f0f0"/><rect x="503" y="385" width="1" height="16" fill="#f0f0f0"/><rect x="586" y="385" width="1" height="16" fill="#f0f0f0"/><rect x="720" y="385" width="1" height="16" fill="#f0f0f0"/><g shape-rendering="crispEdges" fill="#2d48c6"><rect x="246" y="386" width="5" height="1"/><rect x="250" y="386" width="1" height="5"/></g><path d="M238 398 L250 387.2" stroke="#2d48c6" stroke-width="1.6" stroke-dasharray="2.5 1.9" fill="none"/><rect x="443.5" y="387.5" width="12" height="12" fill="#fff" stroke="#333"/><rect x="834" y="257" width="1" height="144" fill="#fafafa"/><rect x="835" y="257" width="17" height="144" fill="#f0f0f0"/><path d="M840.3 269.5 L843.8 266 L847.3 269.5" stroke="#555" stroke-width="1.9" fill="none"/><path d="M840.3 391 L843.8 394.5 L847.3 391" stroke="#555" stroke-width="1.9" fill="none"/><rect x="836" y="275" width="15" height="11" fill="#cdcdcd"/></svg>
<div class="t" style="left:231px;top:238px">Relation Criterion</div>
<div class="t" style="left:445px;top:238px">Is Applied</div>
<div class="t" style="left:509px;top:238px">Direction</div>
<div class="t" style="left:592px;top:238px">Properties</div>
<div class="t" style="left:725px;top:238px">Style</div>
<div class="t" style="left:244px;top:258px;font-weight:bold;letter-spacing:0.5px;color:#6d6d6d">Relations</div>
<div class="t" style="left:256px;top:273px;color:#fff">Abstraction</div>
<div class="t" style="left:460px;top:273px;color:#fff">true</div>
<div class="t" style="left:505px;top:273px;color:#fff">Source To Tar…</div>
<div class="t" style="left:589px;top:273px;color:#fff">Include Subtypes="true"</div>
<div class="t" style="left:256px;top:289px;color:#000">additionalElementImport <span style="color:#8f8f8f">[ElementI...</span></div>
<div class="t" style="left:460px;top:289px;color:#000">false</div>
<div class="t" style="left:256px;top:305px;color:#000">additionalPackageImport <span style="color:#8f8f8f">[PackageI...</span></div>
<div class="t" style="left:460px;top:305px;color:#000">false</div>
<div class="t" style="left:256px;top:321px;color:#000">assembly <span style="color:#8f8f8f">[Dependency]</span></div>
<div class="t" style="left:460px;top:321px;color:#000">false</div>
<div class="t" style="left:256px;top:337px;color:#000">Call <span style="color:#8f8f8f">[Usage]</span></div>
<div class="t" style="left:460px;top:337px;color:#000">false</div>
<div class="t" style="left:256px;top:353px;color:#000">Create <span style="color:#8f8f8f">[BehavioralFeature, Usage]</span></div>
<div class="t" style="left:460px;top:353px;color:#000">false</div>
<div class="t" style="left:256px;top:369px;color:#000">delegate <span style="color:#8f8f8f">[Dependency]</span></div>
<div class="t" style="left:460px;top:369px;color:#000">false</div>
<div class="t" style="left:256px;top:385px;color:#000">Dependency</div>
<div class="t" style="left:460px;top:385px;color:#000">false</div>
<!-- filter -->
<div class="a" style="left:226px;top:405px;width:627px;height:22px;background:#fff;border:1px solid #a0a0a0"></div>
<svg class="a" style="left:0;top:0" width="866" height="501">
<circle cx="235.8" cy="414.8" r="4.9" fill="none" stroke="#3a3a3a" stroke-width="2.1"/>
<path d="M239.3 418.3 L243 422" stroke="#3a3a3a" stroke-width="2.3"/>
<rect x="230.5" y="437.5" width="12" height="12" fill="#fff" stroke="#333"/>
<path d="M232.5 443.5 L235.5 446.5 L240.8 440.5" stroke="#222" stroke-width="1.3" fill="none"/>
</svg>
<div class="t" style="left:250px;top:407px;color:#6d6d6d">Type here to filter properties</div>
<div class="t" style="left:246px;top:435px;letter-spacing:-0.04px">Show Relations Criteria Available Only for Context</div>
<div class="btn" style="left:783px;top:433px;width:69px;height:21px;color:#9a9a9a;background:#cccccc;border-color:#bfbfbf">Clear All</div>

<!-- bottom buttons -->
<div class="btn" style="left:555px;top:473px;width:45px;height:21px">OK</div>
<div class="btn" style="left:612px;top:473px;width:63px;height:21px">Cancel</div>
<div class="btn" style="left:687px;top:473px;width:51px;height:21px">Help</div>
<div class="btn" style="left:750px;top:473px;width:109px;height:21px">Evaluation Mode</div>
</body></html>
